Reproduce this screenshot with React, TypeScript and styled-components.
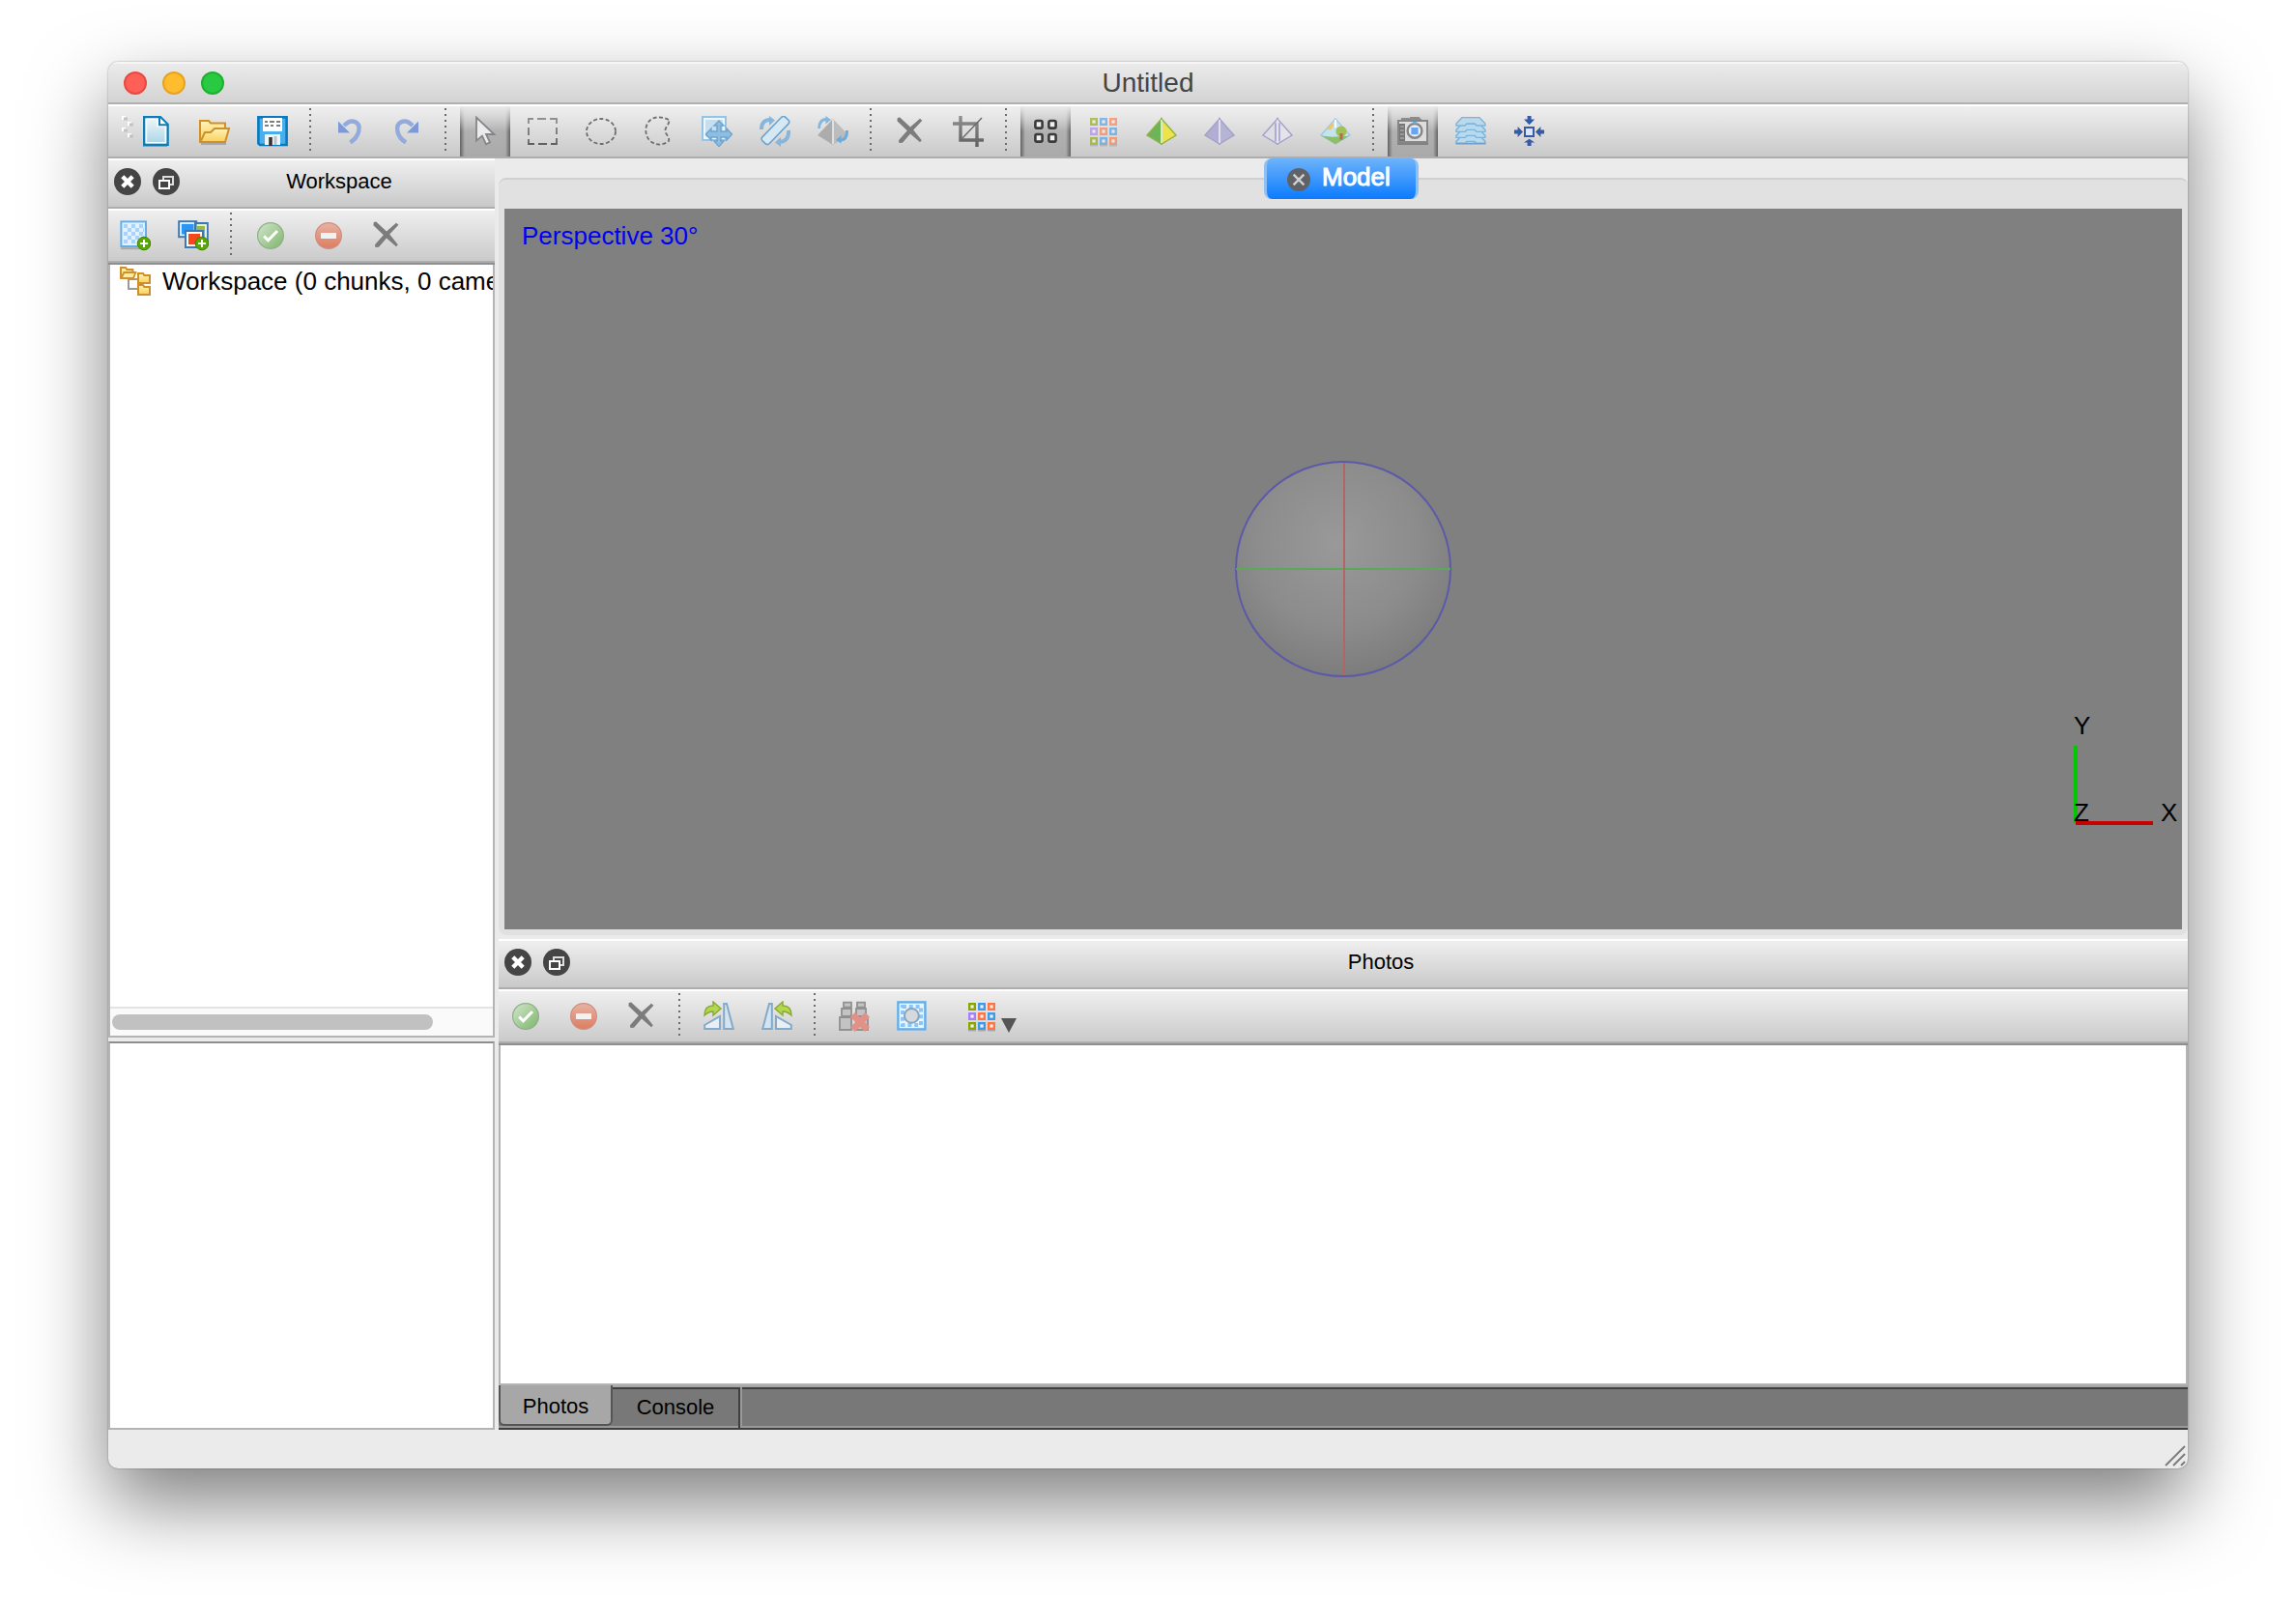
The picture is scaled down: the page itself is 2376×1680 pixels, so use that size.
import React from "react";
import styled, { createGlobalStyle, css } from "styled-components";

const Global = createGlobalStyle`
  *, *::before, *::after { box-sizing: border-box; }
  body { margin: 0; background: #fff; font-family: "Liberation Sans", Arial, Helvetica, sans-serif; color: #000; }
  button { font: inherit; color: inherit; border: 0; padding: 0; margin: 0; background: none; }
  h1, h2, p { margin: 0; padding: 0; font-weight: 400; }
`;

const barFace = css`
  border-top: 2px solid #fff;
  border-bottom: 2px solid #adadad;
  background: linear-gradient(#efefef, #c9c9c9);
`;

const Page = styled.div`
  display: flex;
  min-height: 100vh;
  padding: 64px 112px 160px;
`;

const Window = styled.div`
  flex: 1;
  min-width: 0;
  display: flex;
  flex-direction: column;
  background: #ebebeb;
  border-radius: 10px;
  overflow: hidden;
  box-shadow: 0 0 2px rgba(0, 0, 0, 0.4), 0 36px 80px rgba(0, 0, 0, 0.5);
`;

const TitleBar = styled.header`
  display: grid;
  grid-template-columns: 1fr auto 1fr;
  align-items: center;
  height: 44px;
  padding: 0 16px;
  border-top: 2px solid #f6f6f6;
  border-bottom: 2px solid #b0b0b0;
  background: linear-gradient(#ebebeb, #d3d3d3);
`;

const Lights = styled.div`
  display: flex;
  gap: 16px;
`;

const Light = styled.button<{ $fill: string; $edge: string }>`
  width: 24px;
  height: 24px;
  border-radius: 50%;
  background: ${(p) => p.$fill};
  border: 2px solid ${(p) => p.$edge};
`;

const Title = styled.h1`
  font-size: 28px;
  line-height: 32px;
  color: #454545;
`;

const ToolBar = styled.div<{ $indent?: number }>`
  ${barFace}
  display: flex;
  flex: none;
  gap: 8px;
  height: 56px;
  padding-left: ${(p) => p.$indent ?? 2}px;
`;

const HeavyToolBar = styled(ToolBar)`
  height: 58px;
  box-shadow: inset 0 -2px 0 #adadad;
  border-bottom-color: #8e8e8e;
`;

const Grip = styled.svg`
  width: 14px;
  height: 52px;
  margin-right: -12px;
`;

const ToolButton = styled.button<{ $pressed?: boolean }>`
  display: flex;
  align-items: center;
  justify-content: center;
  width: 52px;
  height: 52px;
  ${(p) =>
    p.$pressed &&
    css`
      background:
        linear-gradient(rgba(233, 233, 233, 1), rgba(233, 233, 233, 0) 50%),
        linear-gradient(90deg, rgba(80, 80, 80, 0.8), rgba(120, 120, 120, 0) 5px calc(100% - 5px), rgba(80, 80, 80, 0.8)),
        linear-gradient(#c0c0c0, #b2b2b2 45%, #a9a9a9);
    `}
`;

const MenuButton = styled(ToolButton)`
  width: 80px;
  gap: 4px;
  padding-left: 16px;
`;

const Separator = styled.span`
  flex: none;
  width: 12px;
  height: 46px;
  margin-top: 2px;
  background: repeating-linear-gradient(#6c6c6c 0 2px, transparent 2px 6px) 4px 0 / 2px 100% no-repeat;
`;

const Icon = styled.svg<{ $faded?: boolean }>`
  flex: none;
  width: 32px;
  height: 32px;
  opacity: ${(p) => (p.$faded ? 0.6 : 1)};
`;

const Arrow = styled.svg`
  width: 16px;
  height: 16px;
  margin-top: 18px;
`;

const Body = styled.div`
  flex: 1;
  display: flex;
  gap: 4px;
  min-height: 0;
`;

const SideColumn = styled.aside`
  flex: none;
  width: 400px;
  display: flex;
  flex-direction: column;
`;

const MainColumn = styled.main`
  flex: 1;
  min-width: 0;
  display: flex;
  flex-direction: column;
`;

const DockHeader = styled.div`
  ${barFace}
  display: flex;
  flex: none;
  height: 52px;
  padding: 8px 0 0 6px;
`;

const DockButton = styled.button`
  width: 28px;
  height: 28px;
  margin-right: 12px;
  & + & { margin-right: 4px; }
  svg { display: block; }
`;

const DockTitle = styled.h2`
  flex: 1;
  text-align: center;
  font-size: 22px;
  line-height: 28px;
`;

const Tree = styled.div`
  flex: 1;
  display: flex;
  flex-direction: column;
  border: 2px solid #b4b4b4;
  border-top: 0;
  background: #fff;
`;

const TreeRow = styled.div`
  flex: 1;
  display: flex;
  align-items: flex-start;
  gap: 12px;
  padding-left: 10px;
  overflow: hidden;
  white-space: nowrap;
  font-size: 26px;
  line-height: 34px;
`;

const ScrollTrack = styled.div`
  height: 30px;
  padding: 6px 2px;
  border-top: 2px solid #e3e3e3;
  background: #fafafa;
`;

const ScrollThumb = styled.div`
  height: 16px;
  border-radius: 8px;
  background: #c1c1c1;
`;

const Properties = styled.section`
  flex: none;
  height: 402px;
  margin-top: 4px;
  border: 2px solid #b4b4b4;
  border-top-color: #8e8e8e;
  background: #fff;
`;

const TabStrip = styled.div`
  display: flex;
  justify-content: center;
  padding-right: 4px;
  height: 42px;
`;

const ModelTab = styled.div`
  z-index: 1;
  display: flex;
  align-items: center;
  gap: 12px;
  width: 160px;
  height: 42px;
  padding-left: 21px;
  border: solid #8fc0f5;
  border-width: 0 3px;
  border-radius: 8px;
  background: linear-gradient(#6db3fa, #0b7bff);
`;

const CloseTab = styled.button`
  width: 24px;
  height: 24px;
  margin-top: 2px;
  svg { display: block; }
`;

const TabLabel = styled.button`
  font-size: 26px;
  line-height: 30px;
  margin-bottom: 4px;
  color: #fff;
  -webkit-text-stroke: 1px #fff;
`;

const ModelPanel = styled.section`
  flex: 1;
  display: flex;
  margin: -22px 0 4px;
  padding: 30px 6px 6px;
  border-top: 2px solid #d0d0d0;
  border-radius: 8px;
  background: #e1e1e1;
`;

const Viewport = styled.div`
  position: relative;
  flex: 1;
  display: flex;
  align-items: center;
  justify-content: center;
  background: #808080;
`;

const Projection = styled.p`
  position: absolute;
  top: 12px;
  left: 18px;
  font-size: 26px;
  line-height: 32px;
  color: #0000f4;
`;

const Axes = styled.svg`
  position: absolute;
  right: 0;
  bottom: 100px;
  font-size: 26px;
`;

const PhotosDock = styled.section`
  flex: none;
  display: flex;
  flex-direction: column;
  height: 508px;
`;

const PhotoList = styled.div`
  flex: 1;
  border: 2px solid #b4b4b4;
  border-top: 0;
  background: #fff;
`;

const BottomTabs = styled.div`
  display: flex;
  height: 46px;
  background: linear-gradient(#a7a7a7 0 2px, #3f3f3f 2px 4px, #787878 4px 42px, #999 42px 44px, #3f3f3f 44px);
`;

const BottomTab = styled.button<{ $active?: boolean }>`
  font-size: 22px;
  line-height: 26px;
  ${(p) =>
    p.$active
      ? css`
          width: 118px;
          height: 42px;
          padding-top: 4px;
          background: #a7a7a7;
          border: 2px solid #555;
          border-top: 0;
          border-radius: 0 0 6px 6px;
        `
      : css`
          width: 134px;
          height: 42px;
          margin-top: 2px;
          padding-right: 2px;
          border-right: 2px solid #999;
          box-shadow: inset -2px 0 0 #3f3f3f;
        `}
`;

const StatusBar = styled.footer`
  display: flex;
  justify-content: flex-end;
  align-items: flex-end;
  height: 40px;
  padding: 0 2px 2px;
`;

type IconProps = { faded?: boolean; children: React.ReactNode };
const Glyph = ({ faded, children }: IconProps) => (
  <Icon viewBox="0 0 16 16" $faded={faded} aria-hidden="true">
    {children}
  </Icon>
);

const Tool = ({ label, pressed, faded, children }: { label: string; pressed?: boolean } & IconProps) => (
  <ToolButton type="button" aria-label={label} aria-pressed={pressed} $pressed={pressed}>
    <Glyph faded={faded}>{children}</Glyph>
  </ToolButton>
);

const cellColors = ["#8ba600", "#3f9be8", "#ff7543", "#a780f5", "#ff7543", "#3f9be8", "#8ba600", "#3f9be8", "#ff7543"];
const GridCells = () => (
  <>
    {cellColors.map((c, i) => (
      <g key={i} transform={`translate(${1 + (i % 3) * 5} ${1 + Math.floor(i / 3) * 5})`}>
        <rect width="4" height="4" fill={c} />
        <rect x="1.2" y="1.2" width="1.6" height="1.6" fill="#f4f0ee" />
      </g>
    ))}
    <path d="M1 15.4h4M6 15.4h4M11 15.4h4" stroke="#000" strokeOpacity=".2" strokeWidth=".8" />
  </>
);

const CheckArt = () => (
  <>
    <circle cx="8" cy="8" r="6.7" fill="url(#greenBall)" stroke="#8fb08a" strokeWidth=".6" />
    <path d="M4.6 8.2l2.1 2.2 4.8-4.9" fill="none" stroke="#fff" strokeWidth="1.5" />
  </>
);
const MinusArt = () => (
  <>
    <circle cx="8" cy="8" r="6.7" fill="url(#redBall)" stroke="#cf8f80" strokeWidth=".6" />
    <rect x="4" y="6.5" width="8" height="3" fill="#f2f2f2" />
  </>
);
const CrossArt = () => (
  <path
    d="M1.4 1L2.6.8 8 5.8 13 1.4 14.2 2.4 9.6 7.2 13.9 12.6 13 13.6 8 9.3 4 13.9 2.2 14 2 12.6 6.4 7.6 1.2 2.6z"
    fill="#7c7c7c"
  />
);
const PlusBadge = () => (
  <>
    <circle cx="12.5" cy="12" r="3.4" fill="#57a800" stroke="#3c8200" strokeWidth=".5" />
    <path d="M12.5 10v4M10.5 12h4" stroke="#fff" />
  </>
);

const CloseDockArt = () => (
  <svg width="28" height="28" viewBox="0 0 14 14" aria-hidden="true">
    <circle cx="7" cy="7" r="7" fill="#454545" />
    <path d="M4.4 4.4l5.2 5.2M9.6 4.4L4.4 9.6" stroke="#fff" strokeWidth="2.2" />
  </svg>
);
const FloatDockArt = () => (
  <svg width="28" height="28" viewBox="0 0 14 14" aria-hidden="true">
    <circle cx="7" cy="7" r="7" fill="#454545" />
    <path d="M5.5 6V4.5h5v4H9" fill="none" stroke="#ddd" />
    <rect x="3.5" y="6.5" width="5" height="4" fill="#454545" stroke="#fff" />
  </svg>
);

const Dock = ({ title }: { title: string }) => (
  <DockHeader>
    <DockButton type="button" aria-label={`Close ${title}`}><CloseDockArt /></DockButton>
    <DockButton type="button" aria-label={`Float ${title}`}><FloatDockArt /></DockButton>
    <DockTitle>{title}</DockTitle>
  </DockHeader>
);

const Pyramid = ({ left, right, edge, hollow }: { left: string; right: string; edge: string; hollow?: boolean }) => (
  <>
    <path d="M8 1.5L.5 10 8 14.5z" fill={left} stroke={edge} strokeWidth=".7" />
    <path d="M8 1.5L15.5 10 8 14.5z" fill={right} stroke={edge} strokeWidth=".7" />
    {hollow ? <path d="M7 3.6v9.6M9 3.6v9.6" stroke={edge} strokeWidth=".8" /> : null}
    <path d="M8 2v12" stroke="#fff" strokeOpacity=".65" />
  </>
);

const Gradients = () => (
  <svg width="0" height="0" display="block" aria-hidden="true">
    <defs>
      <linearGradient id="greenBall" x1="0" y1="0" x2="1" y2="1">
        <stop offset="0" stopColor="#d3e6ce" />
        <stop offset="1" stopColor="#7db568" />
      </linearGradient>
      <linearGradient id="redBall" x1="0" y1="0" x2="0" y2="1">
        <stop offset="0" stopColor="#e6b3a5" />
        <stop offset="1" stopColor="#dd7c60" />
      </linearGradient>
      <linearGradient id="paper" x1="0" y1="0" x2="0" y2="1">
        <stop offset="0" stopColor="#f1f8fb" />
        <stop offset="1" stopColor="#a8d3e6" />
      </linearGradient>
      <linearGradient id="folder" x1="0" y1="0" x2="0" y2="1">
        <stop offset="0" stopColor="#fff3b8" />
        <stop offset="1" stopColor="#f9cf58" />
      </linearGradient>
      <linearGradient id="steel" x1="0" y1="0" x2="0" y2="1" gradientUnits="objectBoundingBox">
        <stop offset="0" stopColor="#8f8f8f" />
        <stop offset="1" stopColor="#5f5f5f" />
      </linearGradient>
      <radialGradient id="ball" cx=".47" cy=".38" r=".64">
        <stop offset="0" stopColor="#999" />
        <stop offset=".6" stopColor="#8c8c8c" />
        <stop offset="1" stopColor="#7b7b7b" />
      </radialGradient>
    </defs>
  </svg>
);

const folderPath = "M0 0h2.5l.7 1H6v4H0z";
const checkerRows = [0, 1, 2, 3, 4];

export default function App() {
  return (
    <Page>
      <Global />
      <Window>
        <Gradients />
        <TitleBar>
          <Lights>
            <Light type="button" aria-label="Close" $fill="#ff5f57" $edge="#e8493f" />
            <Light type="button" aria-label="Minimize" $fill="#ffbd2e" $edge="#e6a323" />
            <Light type="button" aria-label="Zoom" $fill="#28ca42" $edge="#1db02f" />
          </Lights>
          <Title>Untitled</Title>
        </TitleBar>

        <ToolBar role="toolbar" aria-label="Main" $indent={14}>
          <Grip viewBox="0 0 7 26" aria-hidden="true">
            <path d="M0 6h2M0 12h2M3 9h2M3 15h2" stroke="#fff" strokeWidth="2" />
            <path d="M1 6.5h2M1 12.5h2M4 9.5h2M4 15.5h2" stroke="#c2c2c2" strokeWidth="1.5" />
          </Grip>
          <Tool label="New">
            <path d="M1 15.6h12.5" stroke="#000" strokeOpacity=".25" strokeWidth=".8" />
            <path d="M1.6.6h8.4l3.8 3.8v10.500H1.600z" fill="url(#paper)" stroke="#0f7cb5" strokeWidth="1.2" />
            <path d="M2.7 1.6h5.800v3.800h4.200v8.500h-10z" fill="none" stroke="#fff" strokeWidth=".8" />
            <path d="M9.500.8v3.800h4" fill="#fff" stroke="#0f7cb5" />
          </Tool>
          <Tool label="Open">
            <path d="M1 14.5h13" stroke="#000" strokeOpacity=".2" />
            <path d="M.5 13.500V2.500H5l1 1.200h7.500V7" fill="url(#folder)" stroke="#cf902a" />
            <path d="M.7 13.500L3 8.500h3l2-2h7.500l-2 7z" fill="url(#folder)" stroke="#cf902a" />
          </Tool>
          <Tool label="Save">
            <path d="M.7.7h14.600v14.300H1.500L.7 14.200z" fill="#49b0ee" stroke="#0b79bd" strokeWidth="1.3" />
            <rect x="3" y="1" width="10" height="7" fill="#fff" />
            <path d="M4 3h1.500M6.500 3H9M10 3h2M4 5h2M7 5h1.500M10 5h2" stroke="#555" strokeWidth=".8" />
            <rect x="4" y="9.500" width="8" height="5.500" fill="#f2f5f8" />
            <path d="M7 11v4.500" stroke="#333" strokeWidth="1.8" />
            <path d="M9.500 10.500V15" stroke="#b9c1c9" strokeWidth="1.5" />
          </Tool>
          <Separator />
          <Tool label="Undo">
            <path d="M5 5C9 .8 13.700 3 12.600 8 12 10.500 10.200 12.500 8.200 13.700" fill="none" stroke="#92abdc" strokeWidth="2.2" />
            <path d="M2 2.800v6h6z" fill="#7d9ad6" />
          </Tool>
          <Tool label="Redo">
            <path d="M10.500 5C6.500.8 1.800 3 2.700 8 3.200 10.500 5 12.500 7 13.700" fill="none" stroke="#92abdc" strokeWidth="2.2" />
            <path d="M13.500 2.800v6h-6z" fill="#7d9ad6" />
          </Tool>
          <Separator />
          <Tool label="Navigation" pressed>
            <path d="M3.500.8v12l3-2.500 2 4.400 2-1-2-4.200h4.200z" fill="#ebebeb" stroke="#858589" strokeWidth=".9" />
          </Tool>
          <Tool label="Rectangle selection">
            <path d="M.5 4V1.500H3M5 1.500h4.500M11.500 1.500h3.500V4M15 6v3.500M15 11.500v3h-3M10 14.500H5.500M3.500 14.500H.5V12M.5 10V6" fill="none" stroke="url(#steel)" strokeWidth=".9" />
          </Tool>
          <Tool label="Circle selection">
            <ellipse cx="8" cy="8" rx="7.500" ry="6.500" fill="none" stroke="#6d6d6d" strokeDasharray="2 1.2" strokeWidth=".9" />
          </Tool>
          <Tool label="Free-form selection">
            <path d="M13 2C9 0 4 0 2 4c-1.600 3-.8 7 1.500 9 2.800 2.400 6.500 2.400 9.500 0 .8-2-1.800-3.500-1.800-5.500S13.800 4 13 2z" fill="none" stroke="#6d6d6d" strokeDasharray="2 1.2" strokeWidth=".9" />
          </Tool>
          <Tool label="Move region">
            <rect x=".5" y=".5" width="12" height="12" fill="#c5dff0" stroke="#94c4e6" />
            <rect x="1.500" y="1.500" width="10" height="10" fill="none" stroke="#fff" strokeWidth=".7" />
            <path d="M9 2.500l2.500 2.500H10v3h3V6.500l2.800 3L13 12.500V11h-3v2h1.500L9 15.800 6.500 13H8v-2H5v1.500L2.200 9.500 5 6.500V8h3V5H6.500z" fill="#8fbde0" stroke="#6ea4cf" strokeWidth=".7" />
          </Tool>
          <Tool label="Rotate region">
            <path d="M1 7C.8 3.500 3 1.800 5.500 2" fill="none" stroke="#86b6dc" strokeWidth="2" />
            <path d="M5 0l3 2.300L5 5zM11 16l-3-2.300 3-2.700z" fill="#86b6dc" />
            <path d="M15 7.500c.3 4-1.500 5.800-4.500 6" fill="none" stroke="#86b6dc" strokeWidth="2" />
            <rect x="5.300" y="-1" width="5" height="17" rx="1.500" transform="rotate(44 8 8)" fill="#d5e8f4" stroke="#6ea4cf" strokeWidth=".8" />
          </Tool>
          <Tool label="Rotate object">
            <path d="M8 1.500L0 10l8 5z" fill="#acacac" />
            <path d="M8 1.500L16 10l-8 5z" fill="#bcbcbc" />
            <path d="M8 2v12.500" stroke="#ececec" strokeWidth=".8" />
            <path d="M.8 6.500C.8 3.500 2.200 1.800 4.500 1.800" fill="none" stroke="#86b6dc" strokeWidth="1.5" />
            <path d="M4.200 0L7 2 4.200 4.200z" fill="#86b6dc" />
            <path d="M15.200 7.500c.2 3.200-1 5-3.200 5" fill="none" stroke="#6fabd8" strokeWidth="1.5" />
            <path d="M12.300 10L9.500 12.400l2.800 2z" fill="#6fabd8" />
          </Tool>
          <Separator />
          <Tool label="Delete selection"><CrossArt /></Tool>
          <Tool label="Crop selection">
            <path d="M4 0v12.500h12M0 4h12.500v12" fill="none" stroke="url(#steel)" strokeWidth="1.7" />
            <path d="M5 11.500L15 1" stroke="#6a6a6a" strokeWidth=".7" />
          </Tool>
          <Separator />
          <Tool label="Point cloud" pressed>
            {[2.5, 9.5].map((y) =>
              [2.7, 9.7].map((x) => (
                <rect key={`${x}-${y}`} x={x} y={y} width="3.6" height="3.8" rx=".8" fill="#f1f1f1" stroke="#3a3a3a" strokeWidth="1.3" />
              )),
            )}
          </Tool>
          <Tool label="Dense cloud" faded><GridCells /></Tool>
          <Tool label="Shaded"><Pyramid left="#6cb457" right="#ede34c" edge="#8fb347" /></Tool>
          <Tool label="Solid"><Pyramid left="#b0aed3" right="#b5b4d2" edge="#a3a1cb" /></Tool>
          <Tool label="Wireframe"><Pyramid left="#dddde4" right="#e4e4e8" edge="#a3a1cb" hollow /></Tool>
          <Tool label="Textured">
            <path d="M8 1.500L.5 10 8 14.500 15.500 10z" fill="#c2e4f0" stroke="#9fcade" strokeWidth=".7" />
            <path d="M.8 10.300Q5 11 8 10.800T15 10.400L8 14.600z" fill="#8fbe68" />
            <path d="M6.500 3.600L3.500 7 5.500 7.200 7.300 5z" fill="#f9c363" />
            <circle cx="11" cy="8" r="2.8" fill="#a3c053" />
            <path d="M11 9v3.300" stroke="#a97252" strokeWidth="1.5" />
            <path d="M8 2v4" stroke="#fff" />
          </Tool>
          <Separator />
          <Tool label="Show cameras" pressed>
            <path d="M0 14.500h16" stroke="#000" strokeOpacity=".25" />
            <path d="M2 1.500h4M7 1h4l1 1H6z" stroke="#8b8b8b" fill="#aaa" />
            <rect x=".5" y="2.500" width="15" height="11" fill="#ddd" stroke="#868686" />
            <rect x="1" y="4" width="3" height="9" fill="#767676" />
            <path d="M1.500 5.500h2M1.500 7.500h2M1.500 9.500h2M1.500 11.500h2" stroke="#bbb" strokeWidth=".6" />
            <circle cx="9" cy="7.700" r="3.700" fill="#e9eef5" stroke="#868686" strokeWidth="1.2" />
            <rect x="7.200" y="6" width="3.600" height="3.600" fill="#68a5f0" />
            <path d="M8 3.500h2" stroke="#56b3f5" />
          </Tool>
          <Tool label="Show chunks">
            {[10, 7, 4, 0.8].map((y) => (
              <path key={y} d={`M3.500 ${y}h9L15.500 ${y + 3.2}v1H11l-1-1H6l-1 1H.5v-1z`} fill="#b9d9ec" stroke="#7fb2d8" strokeWidth=".7" />
            ))}
            <path d="M.3 14.300h15.400" stroke="#6f9fc8" strokeWidth=".8" />
          </Tool>
          <Tool label="Reset view">
            <rect x="6" y="6" width="4.500" height="4.500" fill="#dfe5f2" stroke="#335ba8" />
            <path d="M7.300 0h2v1.800h1.800L8.300 4.600 5.500 1.800h1.800zM7.300 15.500h2v-1.800h1.800L8.300 11.900 5.500 13.700h1.800zM.5 7.300h1.800V5.500L5 8.200 2.300 11V9.200H.5zM16 7.300h-1.800V5.500L11.500 8.200l2.700 2.800V9.200H16z" fill="#335ba8" />
          </Tool>
        </ToolBar>

        <Body>
          <SideColumn>
            <Dock title="Workspace" />
            <HeavyToolBar role="toolbar" aria-label="Workspace">
              <Tool label="Add chunk">
                <rect x=".7" y=".7" width="12.800" height="12.800" fill="#e3f1fe" stroke="#63aee9" />
                {checkerRows.map((r) => (
                  <path key={r} d={`M${r % 2 ? 4 : 2} ${3 + r * 2}H12.500`} stroke="#a9d4fa" strokeWidth="2" strokeDasharray="2 2" />
                ))}
                <path d="M.5 14.600h10" stroke="#000" strokeOpacity=".2" />
                <PlusBadge />
              </Tool>
              <Tool label="Add photos">
                <rect x=".6" y=".6" width="9" height="8" fill="#2a97f4" stroke="#3b78b4" />
                <rect x="1.500" y="1.500" width="7.200" height="6.200" fill="none" stroke="#fff" strokeWidth=".8" />
                <rect x="9" y="1.500" width="6.400" height="9" fill="#96b94a" stroke="#3b78b4" />
                <path d="M10 2.500h4.500v7" fill="none" stroke="#fff" strokeWidth=".8" />
                <rect x="4" y="5.500" width="9" height="8.500" fill="#fff" stroke="#3b78b4" />
                <rect x="5.500" y="7" width="6" height="5.500" fill="#f8471c" />
                <PlusBadge />
              </Tool>
              <Separator />
              <Tool label="Enable"><CheckArt /></Tool>
              <Tool label="Disable"><MinusArt /></Tool>
              <Tool label="Remove"><CrossArt /></Tool>
            </HeavyToolBar>
            <Tree>
              <TreeRow>
                <Glyph>
                  <path d="M4.500 6v6.500H10M4.500 7.500H10" fill="none" stroke="#9a9a9a" />
                  <path d="M.5 7V1.500H3l.7 1h3V4" fill="url(#folder)" stroke="#cf902a" />
                  <path d="M.7 7l1.500-3h6L7 7z" fill="#fdeaa0" stroke="#cf902a" strokeWidth=".9" />
                  <path d={folderPath} transform="translate(9.500 4.500)" fill="url(#folder)" stroke="#cf902a" />
                  <path d={folderPath} transform="translate(9.500 10.500)" fill="url(#folder)" stroke="#cf902a" />
                </Glyph>
                <span>Workspace (0 chunks, 0 came</span>
              </TreeRow>
              <ScrollTrack>
                <ScrollThumb style={{ width: `${(332 / 392) * 100}%` }} />
              </ScrollTrack>
            </Tree>
            <Properties aria-label="Properties" />
          </SideColumn>

          <MainColumn>
            <TabStrip>
              <ModelTab>
                <CloseTab type="button" aria-label="Close Model">
                  <svg width="24" height="24" viewBox="0 0 12 12" aria-hidden="true">
                    <circle cx="6" cy="6" r="6" fill="#5f6266" />
                    <path d="M3.300 3.300l5.400 5.400M8.700 3.300L3.300 8.700" stroke="#d0d0d0" strokeWidth="1.2" />
                  </svg>
                </CloseTab>
                <TabLabel type="button">Model</TabLabel>
              </ModelTab>
            </TabStrip>
            <ModelPanel>
              <Viewport>
                <Projection>Perspective 30°</Projection>
                <svg width="226" height="226" viewBox="0 0 226 226" aria-hidden="true">
                  <circle cx="113" cy="113" r="111" fill="url(#ball)" stroke="#5c5aa8" strokeWidth="2" />
                  <path d="M2 113h222" stroke="#5aa85a" strokeWidth="2" />
                  <path d="M114 3v220" stroke="#b36464" strokeWidth="2" />
                </svg>
                <Axes width="116" height="126" viewBox="0 0 116 126">
                  <path d="M6 36v80" stroke="#00c800" strokeWidth="4" />
                  <path d="M6 116h80" stroke="#c80000" strokeWidth="4" />
                  <text x="4" y="24">Y</text>
                  <text x="4" y="114">Z</text>
                  <text x="94" y="114">X</text>
                </Axes>
              </Viewport>
            </ModelPanel>

            <PhotosDock>
              <Dock title="Photos" />
              <HeavyToolBar role="toolbar" aria-label="Photos">
                <Tool label="Enable"><CheckArt /></Tool>
                <Tool label="Disable"><MinusArt /></Tool>
                <Tool label="Remove"><CrossArt /></Tool>
                <Separator />
                <Tool label="Rotate right">
                  <path d="M10.600 1.500H12L15.400 14.500h-4.800z" fill="#d5e4ef" stroke="#82aacb" />
                  <path d="M.6 14.500v-2L8.500 8v6.500z" fill="#e9eff4" stroke="#82aacb" />
                  <path d="M.5 7.500C.5 4 2 2.500 5 2.500V.5L9 4 5 7.500V5.500C3 5.500 2 6 .5 7.500z" fill="#b3d850" stroke="#86aa32" strokeWidth=".7" />
                </Tool>
                <Tool label="Rotate left">
                  <path d="M5.400 1.500H4L.6 14.500h4.800z" fill="#d5e4ef" stroke="#82aacb" />
                  <path d="M15.400 14.500v-2L7.500 8v6.500z" fill="#e9eff4" stroke="#82aacb" />
                  <path d="M15.500 7.500C15.500 4 14 2.500 11 2.500V.5L7 4l4 3.500V5.500C13 5.500 14 6 15.500 7.500z" fill="#b3d850" stroke="#86aa32" strokeWidth=".7" />
                </Tool>
                <Separator />
                <Tool label="Reset filter">
                  <path d="M2.500.8h4v2.500h-4zM9.500.8h4v2.500h-4zM1.500 4h5v4h-5zM9 4h5v4H9zM.5 8.500h6V15h-6zM9 8.500h6V15H9z" fill="#c3c3c3" stroke="#919191" strokeWidth=".9" />
                  <path d="M7.200 7.200l7.600 7.600M14.800 7.200l-7.600 7.600" fill="none" stroke="#e39187" strokeWidth="3.4" />
                </Tool>
                <Tool label="Masks">
                  <rect x=".7" y=".7" width="14" height="14" fill="#eaf5fe" stroke="#63aee9" strokeWidth="1.2" />
                  <path d="M3 3h9.500v9.500H3z" fill="none" stroke="#8cc6f8" strokeWidth="2" strokeDasharray="2 1.4" />
                  <circle cx="7.700" cy="7.700" r="3.700" fill="#d6d9dc" stroke="#7fa6c4" />
                </Tool>
                <MenuButton type="button" aria-label="View mode">
                  <Glyph><GridCells /></Glyph>
                  <Arrow viewBox="0 0 16 16" aria-hidden="true">
                    <path d="M0 1h16L8 16z" fill="#555" />
                  </Arrow>
                </MenuButton>
              </HeavyToolBar>
              <PhotoList />
              <BottomTabs>
                <BottomTab type="button" $active>Photos</BottomTab>
                <BottomTab type="button">Console</BottomTab>
              </BottomTabs>
            </PhotosDock>
          </MainColumn>
        </Body>
        <StatusBar>
          <svg width="22" height="22" viewBox="0 0 22 22" aria-hidden="true">
            <path d="M1 21L21 1M9 21L21 9M17 21l4-4" stroke="#7d7d7d" strokeWidth="2" />
          </svg>
        </StatusBar>
      </Window>
    </Page>
  );
}
